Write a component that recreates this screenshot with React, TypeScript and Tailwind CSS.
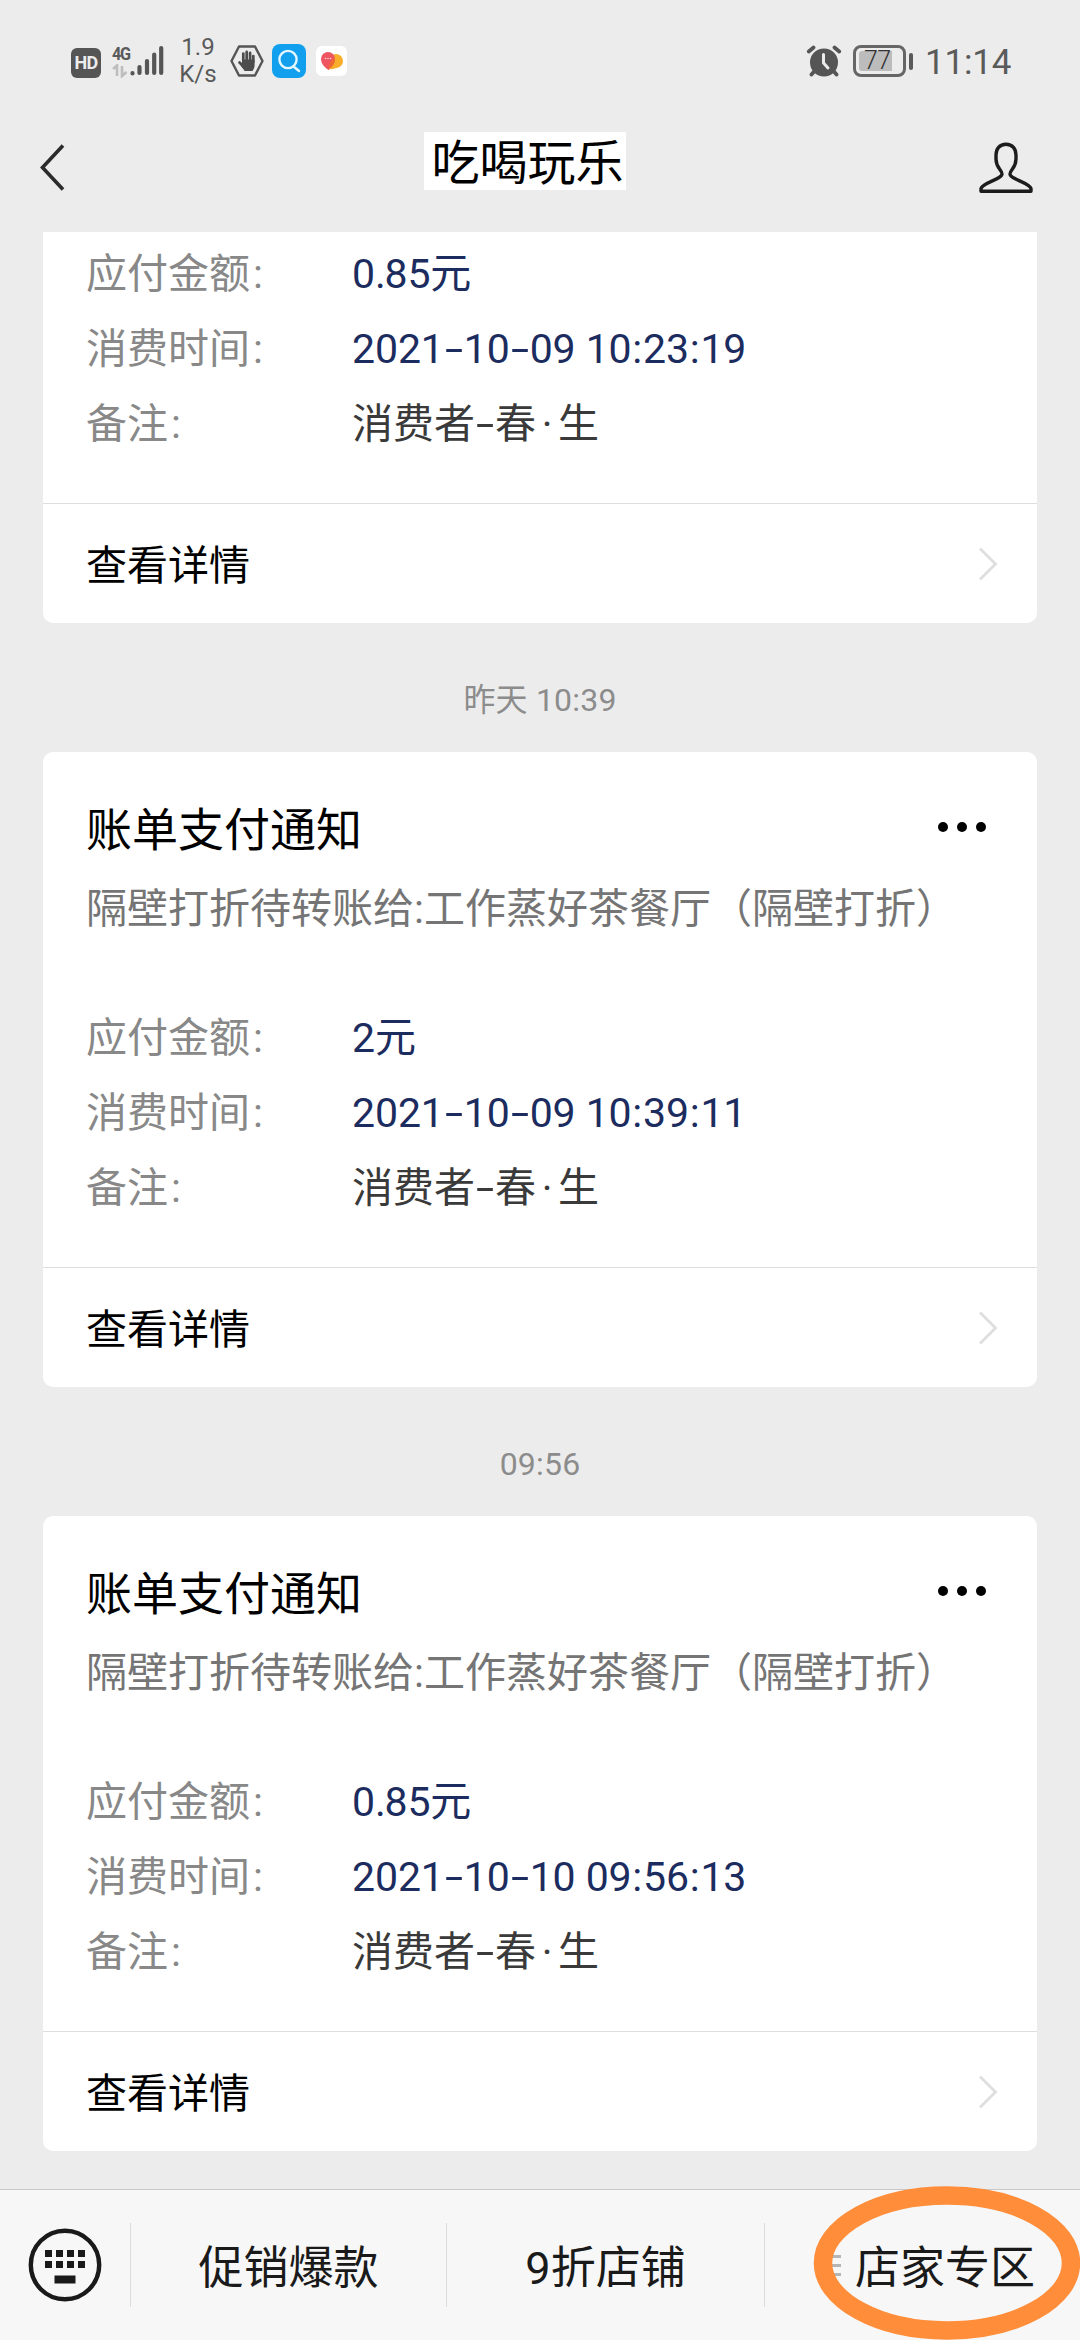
interface Bill {
  time?: string;
  amount: string;
  date: string;
  remark: string;
}

const bills: Bill[] = [
  { amount: "0.85元", date: "2021-10-09 10:23:19", remark: "消费者-春·生" },
  {
    time: "昨天 10:39",
    amount: "2元",
    date: "2021-10-09 10:39:11",
    remark: "消费者-春·生",
  },
  {
    time: "09:56",
    amount: "0.85元",
    date: "2021-10-10 09:56:13",
    remark: "消费者-春·生",
  },
];

function StatusBar() {
  return (
    <div className="flex h-[122px] shrink-0 items-center justify-between pl-[71px] pr-[70px] text-[#5a5a5a]">
      <div className="flex h-[56px] items-center">
        <div className="mt-[3px] flex h-[30px] w-[30px] items-center justify-center rounded-[6px] bg-[#555] text-[18px] leading-[22px] font-bold tracking-[-0.8px] text-[#ececec]">
          HD
        </div>
        <div className="ml-[11px] flex h-[34px] w-[18px] flex-col">
          <span className="origin-left scale-x-90 text-[18px] leading-[20px] font-bold tracking-[-1.5px]">
            4G
          </span>
          <svg width="16" height="14" viewBox="0 0 16 14">
            <path
              d="M1 5L5 1.500V12M10 2V12L14.500 8"
              fill="none"
              stroke="#bdbdbd"
              strokeWidth="2.600"
            />
          </svg>
        </div>
        <svg width="34" height="32" viewBox="0 0 34 32">
          <g stroke="#555" strokeWidth="4.200" strokeLinecap="round">
            <path d="M2.500 28.200V28.400M9.500 22V28M17 16V28M24.200 9.500V28M31.200 3V28" />
          </g>
        </svg>
        <div className="ml-[14px] w-[40px] text-center text-[24px] leading-[27px]">
          <div>1.9</div>
          <div>K/s</div>
        </div>
        <div className="relative ml-[12px] flex h-[32px] w-[34px] items-center justify-center">
          <svg width="34" height="32" viewBox="0 0 34 32">
            <path
              d="M9 1.500H25L32.500 16L25 30.500H9L1.500 16Z"
              fill="none"
              stroke="#555"
              strokeWidth="2.400"
              strokeLinejoin="round"
            />
            <g stroke="#4c4c4c" strokeWidth="2.700" strokeLinecap="round">
              <path d="M13.300 16V8.600M16.700 15V6.900M20.100 16V7.900M23.300 17V11" />
              <path d="M9.500 17.500L13 21" />
            </g>
            <path
              d="M12 14.500H24.600V20C24.600 23 23.500 24 22.500 26H14.500C13.800 24 11.500 22.500 10.500 20L12 18Z"
              fill="#4c4c4c"
            />
          </svg>
        </div>
        <div className="ml-[8px] flex h-[34px] w-[34px] items-center justify-center rounded-[8px] bg-[#12a0ee]">
          <svg width="24" height="24" viewBox="0 0 24 24">
            <g
              fill="none"
              stroke="#e4f6ff"
              strokeWidth="2.400"
              strokeLinecap="round"
            >
              <circle cx="11" cy="10.500" r="8.600" />
              <path d="M16.500 17.500L22 22" />
            </g>
          </svg>
        </div>
        <div className="ml-[10px] flex h-[30px] w-[31px] items-center justify-center rounded-[6px] bg-white">
          <svg width="24" height="20" viewBox="0 0 24 20">
            <circle cx="16" cy="10" r="7" fill="#f9ae2b" />
            <path d="M13 18L10 18.500L12 14L18 16.500Z" fill="#f9ae2b" />
            <path
              d="M8 1A7 7 0 0 1 15 8C15 13 11 16.500 8.500 19C5 16.500 1 13 1 8A7 7 0 0 1 8 1Z"
              fill="#ee5560"
            />
            <path
              d="M14.800 7C15.500 13 11 16.500 8.500 19C9 14 10 9 14.800 7Z"
              fill="#ee6a2e"
            />
            <g fill="#ffd5d5">
              <circle cx="5.500" cy="7.500" r="0.800" />
              <circle cx="8" cy="7.500" r="0.800" />
              <circle cx="10.500" cy="7.500" r="0.800" />
            </g>
          </svg>
        </div>
      </div>

      <div className="flex items-center">
        <svg width="36" height="32" viewBox="0 0 36 32">
          <circle cx="18" cy="17.500" r="14" fill="#555" />
          <g fill="none" stroke="#555" strokeWidth="3.800" strokeLinecap="round">
            <path d="M2.800 6.500L7.500 2.500M33.200 6.500L28.500 2.500" />
            <path d="M8.500 26L5.500 29.500M27.500 26L30.500 29.500" />
          </g>
          <path
            d="M17.500 9.500V18L22 23"
            fill="none"
            stroke="#ececec"
            strokeWidth="3"
            strokeLinecap="round"
          />
        </svg>
        <div className="ml-[11px] flex h-[32px] w-[53px] rounded-[8px] border-[3px] border-[#666] p-[3px]">
          <div className="flex w-[33px] items-center rounded-l-[3px] bg-[#bcbcbc] pl-[5px]">
            <span className="text-[25px] leading-[28px] font-light tracking-[-0.5px] text-[#333]">
              77
            </span>
          </div>
        </div>
        <div className="ml-[3px] h-[17px] w-[4px] rounded-[2px] bg-[#5a5a5a]" />
        <span className="mt-[3px] ml-[12px] w-[85px] text-[35px] leading-[42px] tracking-[-0.2px]">
          11:14
        </span>
      </div>
    </div>
  );
}

function Header() {
  return (
    <div className="flex h-[110px] shrink-0 items-start justify-between pl-[38px] pr-[47px]">
      <svg width="28" height="48" viewBox="0 0 28 48" className="mt-[21px]">
        <path
          d="M25 2.500L4.500 24.500L25 46.500"
          fill="none"
          stroke="#2b2b2b"
          strokeWidth="3.600"
        />
      </svg>
      <div className="mt-[10px] ml-[5px] flex h-[58px] w-[202px] items-center justify-center bg-white pt-[6px] pl-[5px] text-[48px] leading-[58px] text-black">
        吃喝玩乐
      </div>
      <svg width="54" height="52" viewBox="0 0 54 52" className="mt-[20px]">
        <path
          d="M27 2.200C33.500 2.200 37 7 37 13V17C37 26 31 28 31 32C31 37 50 40.500 52 46.500V49.300H2V46.500C4 40.500 23 37 23 32C23 28 17 26 17 17V13C17 7 20.500 2.200 27 2.200Z"
          fill="none"
          stroke="#1c1c1c"
          strokeWidth="3.400"
          strokeLinejoin="round"
        />
      </svg>
    </div>
  );
}

// Punctuation gets fixed advances so dates and remarks keep an even rhythm
const punctuation: Record<string, string> = {
  "-": "inline-block w-[20px] scale-x-[1.6] text-center",
  "·": "inline-block w-[22px] text-center",
  ":": "inline-block w-[11.5px] text-center",
  ".": "inline-block w-[9.5px] text-center",
};

function Spaced({ text }: { text: string }) {
  return text.split(/([-·:.])/).map((part, i) =>
    punctuation[part] ? (
      <span key={i} className={punctuation[part]}>
        {part}
      </span>
    ) : (
      part
    )
  );
}

function Row({
  label,
  value,
  valueClass,
}: {
  label: string;
  value: string;
  valueClass: string;
}) {
  return (
    <div className="flex h-[75px] items-center">
      <span className="w-[266px] text-[#888]">
        {label}
        <span className="inline-block w-[16px] text-center">:</span>
      </span>
      <span className={valueClass}>
        <Spaced text={value} />
      </span>
    </div>
  );
}

function BillCard({ bill }: { bill: Bill }) {
  return (
    <div className="mx-[43px] h-[635px] shrink-0 rounded-[10px] bg-white pt-[44px] text-[41px] leading-[60px]">
      <div className="flex h-[68px] items-center justify-between pl-[43px] pr-[51px]">
        <h2 className="text-[46px] text-black">账单支付通知</h2>
        <div className="flex gap-[9px] pb-[7px]">
          <i className="h-[10px] w-[10px] rounded-full bg-black" />
          <i className="h-[10px] w-[10px] rounded-full bg-black" />
          <i className="h-[10px] w-[10px] rounded-full bg-black" />
        </div>
      </div>
      <p className="flex h-[90px] items-center pl-[43px] whitespace-nowrap text-[#757575]">
        隔壁打折待转账给:工作蒸好茶餐厅（隔壁打折）
      </p>
      <div className="h-[314px] border-b border-[#dedede] pt-[46px] pl-[43px]">
        <Row
          label="应付金额"
          value={bill.amount}
          valueClass="text-[#1c2c5e] tracking-[-0.1px]"
        />
        <Row
          label="消费时间"
          value={bill.date}
          valueClass="text-[#1c2c5e] tracking-[-0.1px]"
        />
        <Row label="备注" value={bill.remark} valueClass="text-[#3a3a3a]" />
      </div>
      <div className="flex h-[119px] items-center justify-between pt-[4px] pl-[43px] pr-[39px] text-black">
        <span>查看详情</span>
        <svg width="20" height="36" viewBox="0 0 20 36" className="mb-[3px]">
          <path
            d="M2 2.500L17.500 18L2 33.500"
            fill="none"
            stroke="#dedede"
            strokeWidth="2.800"
          />
        </svg>
      </div>
    </div>
  );
}

function BottomBar() {
  return (
    <div className="relative flex h-[151px] shrink-0 items-center border-t border-[#c8c8c8] bg-[#f7f7f7] text-[45px] text-[#1a1a1a]">
      <div className="flex w-[130px] justify-center">
        <svg width="74" height="74" viewBox="0 0 74 74">
          <circle
            cx="37"
            cy="37"
            r="34.200"
            fill="none"
            stroke="#1a1a1a"
            strokeWidth="4.400"
          />
          <g fill="#1a1a1a">
            <path d="M17 22h7v7h-7zM28 22h7v7h-7zM39 22h7v7h-7zM50 22h7v7h-7z" />
            <path d="M17 33h7v7h-7zM28 33h7v7h-7zM39 33h7v7h-7zM50 33h7v7h-7z" />
            <path d="M26.500 47.500h21v8h-21z" />
          </g>
        </svg>
      </div>
      <div className="h-[84px] w-px bg-[#dcdcdc]" />
      <div className="w-[315px] pt-[8px] text-center">促销爆款</div>
      <div className="h-[84px] w-px bg-[#dcdcdc]" />
      <div className="w-[317px] pt-[8px] text-center">9折店铺</div>
      <div className="h-[84px] w-px bg-[#dcdcdc]" />
      <div className="flex flex-1 items-center pl-[66px]">
        <div className="mr-[14px] flex w-[10px] flex-col gap-[6px]">
          <i className="h-[3px] bg-[#b5b5b5]" />
          <i className="h-[3px] bg-[#b5b5b5]" />
          <i className="h-[3px] bg-[#b5b5b5]" />
        </div>
        <span className="pt-[8px]">店家专区</span>
      </div>
      {/* hand-drawn highlight */}
      <svg
        width="268"
        height="156"
        viewBox="0 0 268 156"
        className="absolute top-[-5px] left-[812px]"
      >
        <ellipse
          cx="135"
          cy="78"
          rx="124"
          ry="67.500"
          fill="none"
          stroke="#ff8d3a"
          strokeWidth="18.500"
        />
      </svg>
    </div>
  );
}

export default function App() {
  return (
    <div className="flex h-[2340px] w-[1080px] flex-col overflow-hidden bg-[#ececec] font-[Roboto,'Noto_Sans_CJK_SC',sans-serif]">
      <StatusBar />
      <Header />
      <div className="flex min-h-0 flex-1 flex-col justify-end overflow-hidden pb-[38px]">
        {bills.map((bill) => (
          <div key={bill.date} className="flex shrink-0 flex-col">
            {bill.time && (
              <div className="h-[129px] pt-[57px] text-center text-[32px] leading-[40px] tracking-[0.2px] text-[#8c8c8c]">
                {bill.time}
              </div>
            )}
            <BillCard bill={bill} />
          </div>
        ))}
      </div>
      <BottomBar />
    </div>
  );
}
